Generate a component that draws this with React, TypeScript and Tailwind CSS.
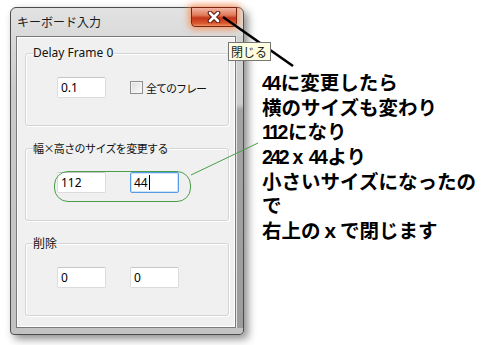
import React from "react";

function Input({ value, focused }: { value: string; focused?: boolean }) {
  return (
    <div
      className={
        "w-[49px] h-[21px] bg-white flex items-center pl-[3px] text-[12px] text-black rounded-[2px] border " +
        (focused
          ? "border-[#569de5] shadow-[inset_0_0_0_1px_#cde4f7]"
          : "border-[#dcdcdc] border-t-[#c6c6c6]")
      }
    >
      <span className="font-['Noto_Sans','Liberation_Sans',sans-serif] leading-[14px]">{value}</span>
      {focused && <span className="ml-[1px] w-[1px] h-[15px] bg-black" />}
    </div>
  );
}

function Group({
  label,
  labelClass,
  children,
  mt,
}: {
  label: string;
  labelClass?: string;
  children: React.ReactNode;
  mt: string;
}) {
  return (
    <div
      className={
        "relative h-[73px] rounded-[3px] border border-[#d5d5d5] shadow-[inset_1px_1px_0_#ffffff,1px_1px_0_#ffffff] " +
        mt
      }
    >
      <span
        className={
          "absolute left-[7px] top-[-8px] bg-[#f0f0f0] pr-[1px] leading-[14px] text-[#111] " +
          (labelClass ?? "text-[12px]")
        }
      >
        {label}
      </span>
      <div className="flex items-center pl-[31px] pt-[23px]">{children}</div>
    </div>
  );
}

const lineCls = "h-[24.7px] leading-[24.7px]";
const digitCls = "font-['Liberation_Sans',sans-serif] tracking-[-2.5px]";

export default function App() {
  return (
    <div className="relative w-[489px] h-[345px] overflow-hidden bg-white flex items-start font-['Noto_Sans','Noto_Sans_CJK_JP',sans-serif]">
      {/* Window */}
      <div className="ml-[10px] mt-[7px] w-[234px] h-[328px] shrink-0 flex flex-col rounded-t-[6px] rounded-b-[4px] border border-[#4d4d4d] bg-[linear-gradient(to_bottom,#e2e2e2,#cbcbcb_25%,#c2c2c2)] shadow-[4px_4px_9px_rgba(0,0,0,0.45)]">
        {/* Title bar */}
        <div className="h-[28px] shrink-0 flex items-start pl-[6px] pr-[6px]">
          <span className="mt-[7px] text-[12px] leading-[14px] text-[#1a1a1a] font-['Noto_Sans_CJK_JP',sans-serif]">
            キーボード入力
          </span>
          <div className="ml-auto mt-[-1px] w-[46px] h-[20px] rounded-b-[4px] border border-[#7a2412] bg-[linear-gradient(to_bottom,#f2b7a4,#e07a5a_40%,#c5361a_55%,#d9582f_85%,#f09060)] shadow-[0_0_7px_2px_rgba(255,120,50,0.75)] flex items-center justify-center">
            <svg width="14" height="12" viewBox="0 0 14 12">
              <path d="M3 2 L11 10 M11 2 L3 10" stroke="#5a1a0c" strokeWidth="4.6" strokeLinecap="round" />
              <path d="M3 2 L11 10 M11 2 L3 10" stroke="#ffffff" strokeWidth="2.6" strokeLinecap="round" />
            </svg>
          </div>
        </div>
        {/* Body */}
        <div className="flex-1 flex pl-[5px] pb-[6px]">
          <div className="flex-1 flex flex-col bg-[#f0f0f0] border border-[#7a7a7a] pl-[8px] pr-[6px] pt-[16px] shadow-[inset_0_0_0_1px_#ffffff]">
            <Group label="Delay Frame 0" mt="">
              <Input value="0.1" />
              <div className="ml-[24px] w-[13px] h-[13px] border border-[#8e8f8f] bg-[linear-gradient(135deg,#dcdcdc,#fbfbfb)] shadow-[inset_0_0_0_1px_#f4f4f4]" />
              <span className="ml-[3px] text-[11px] tracking-[-1px] leading-[14px] text-[#111] font-['Noto_Sans_CJK_JP',sans-serif]">
                全てのフレー
              </span>
            </Group>
            <Group
              label="幅×高さのサイズを変更する"
              labelClass="text-[11px] tracking-[-0.6px] font-['Noto_Sans_CJK_JP',sans-serif]"
              mt="mt-[22px]"
            >
              <Input value="112" />
              <div className="ml-[24px]">
                <Input value="44" focused />
              </div>
              <div className="absolute left-[28px] top-[22px] w-[137px] h-[31px] rounded-[14px] border border-[#4a9e4a]" />
            </Group>
            <Group
              label="削除"
              labelClass="text-[12px] font-['Noto_Sans_CJK_JP',sans-serif]"
              mt="mt-[22px]"
            >
              <Input value="0" />
              <div className="ml-[24px]">
                <Input value="0" />
              </div>
            </Group>
          </div>
          {/* right frame strip */}
          <div className="w-[7px] bg-[linear-gradient(to_bottom,#d2d2d2_0px,#cdcdcd_68px,#a4a4a4_74px,#9c9c9c)] border-l border-[#e4e4e4]" />
        </div>
      </div>

      {/* Annotation text */}
      <div className="ml-[18px] mt-[70px] text-[19.5px] font-bold text-black font-['Noto_Sans_CJK_JP',sans-serif] whitespace-nowrap">
        <div className={lineCls}>
          <span className={digitCls}>44</span>
          <span className="ml-[2px]">に変更したら</span>
        </div>
        <div className={lineCls}>横のサイズも変わり</div>
        <div className={lineCls}>
          <span className={digitCls}>112</span>
          <span className="ml-[2px]">になり</span>
        </div>
        <div className={lineCls}>
          <span className={digitCls}>242</span>
          <span className="font-['Liberation_Sans',sans-serif]"> x </span>
          <span className={digitCls}>44</span>
          <span className="ml-[2px]">より</span>
        </div>
        <div className={lineCls}>小さいサイズになったの</div>
        <div className={lineCls}>で</div>
        <div className={lineCls}>右上のｘで閉じます</div>
      </div>

      {/* Overlays: arrow lines */}
      <svg className="absolute left-0 top-0 pointer-events-none" width="489" height="345">
        <line x1="223" y1="17" x2="293" y2="66" stroke="#000" strokeWidth="2.6" />
        <line x1="191" y1="175" x2="258" y2="143" stroke="#4a9e4a" strokeWidth="1" />
      </svg>

      {/* Tooltip */}
      <div className="absolute left-[228px] top-[42px] w-[43px] h-[19px] bg-[#ffffe1] border border-[#767676] flex items-center pl-[2px] text-[12px] leading-[14px] text-[#222] font-['Noto_Sans_CJK_JP',sans-serif]">
        閉じる
      </div>
    </div>
  );
}
